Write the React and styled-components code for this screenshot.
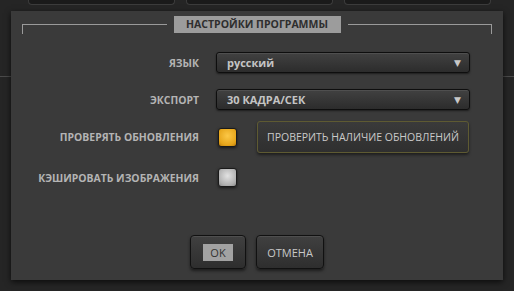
import React from 'react';
import styled, { createGlobalStyle } from 'styled-components';

const Global = createGlobalStyle`
  html, body { margin: 0; padding: 0; background: #252525; }
  body { font-family: "Open Sans", "DejaVu Sans", sans-serif; }
`;

const Page = styled.div`
  position: relative;
  width: 514px;
  height: 291px;
  overflow: hidden;
  background: #252525;
`;

const TopBar = styled.div`
  display: flex;
  gap: 11px;
  padding-left: 28px;
  height: 5px;
`;

const TopButton = styled.div`
  width: 145px;
  height: 4px;
  background: #1a1a1a;
  border: 1px solid #3c3c3c;
  border-top: none;
  border-radius: 0 0 4px 4px;
`;

const BackLine = styled.div`
  margin-top: 71px;
  height: 1px;
  background: #4a4a4a;
`;

const Dialog = styled.div`
  position: absolute;
  left: 11px;
  top: 11px;
  width: 492px;
  height: 269px;
  background: #3a3a3a;
  box-shadow: 0 2px 6px rgba(0, 0, 0, 0.7);
  display: flex;
  flex-direction: column;
`;

const Frame = styled.div`
  margin: 13px 11px 0;
  height: 9px;
  border: 1px solid #9a9a9a;
  border-bottom: none;
  display: flex;
  justify-content: center;
`;

const Title = styled.div`
  margin-top: -9px;
  padding: 0 7px;
  background: #3a3a3a;
  height: 17px;
`;

const TitleText = styled.div`
  background: #9c9c9c;
  color: #2e2e2e;
  font-weight: 700;
  font-size: 10.5px;
  line-height: 17px;
  width: 167px;
  text-align: center;
`;

const Form = styled.div`
  display: grid;
  grid-template-columns: 188px 254px;
  column-gap: 17px;
  margin-top: 18px;
`;

const Label = styled.div`
  text-align: right;
  color: #b4b4b4;
  font-weight: 700;
  font-size: 10.4px;
  display: flex;
  align-items: center;
  justify-content: flex-end;
  height: ${p => p.h}px;
  margin-bottom: ${p => p.mb}px;
`;

const Control = styled.div`
  display: flex;
  align-items: center;
  height: ${p => p.h}px;
  margin-bottom: ${p => p.mb}px;
`;

const Select = styled.div`
  box-sizing: border-box;
  width: 254px;
  height: 21px;
  border: 1px solid #0e0e0e;
  border-radius: 3px;
  background: linear-gradient(#414141, #2c2c2c);
  box-shadow: inset 0 1px 0 rgba(255,255,255,0.08), 0 1px 2px rgba(0,0,0,0.5);
  display: flex;
  align-items: center;
  justify-content: space-between;
  padding: 0 8px 0 10px;
  color: #c4c4c4;
  font-weight: 700;
  font-size: 11px;
`;

const Arrow = styled.span`
  font-size: 9px;
  color: #c8c8c8;
`;

const Check = styled.div`
  box-sizing: border-box;
  width: 19px;
  height: 19px;
  margin-left: 2px;
  border-radius: 3px;
  border: 1px solid #1a1a1a;
  background: ${p => p.on
    ? 'radial-gradient(circle at 50% 40%, #fcc847, #e6a51a 70%, #b87a0c)'
    : 'radial-gradient(circle at 50% 40%, #e2e2e2, #b0b0b0 70%, #8a8a8a)'};
  box-shadow: 0 1px 3px rgba(0,0,0,0.6);
`;

const UpdateButton = styled.div`
  box-sizing: border-box;
  margin-left: 20px;
  width: 212px;
  height: 32px;
  border: 1px solid #5e5a32;
  border-radius: 3px;
  background: linear-gradient(#3a3a3a, #2f2f2f);
  box-shadow: 0 2px 3px rgba(0,0,0,0.5);
  color: #cacaca;
  font-size: 10.5px;
  display: flex;
  align-items: center;
  justify-content: center;
`;

const Footer = styled.div`
  margin-top: auto;
  margin-bottom: 11px;
  display: flex;
  justify-content: center;
  gap: 10px;
`;

const Button = styled.div`
  box-sizing: border-box;
  width: ${p => p.w}px;
  height: 34px;
  border: 1px solid #111;
  border-radius: 4px;
  background: linear-gradient(#404040, #2e2e2e);
  box-shadow: inset 0 1px 0 rgba(255,255,255,0.08), 0 2px 3px rgba(0,0,0,0.5);
  color: #c8c8c8;
  font-size: 11px;
  display: flex;
  align-items: center;
  justify-content: center;
`;

const Focus = styled.span`
  background: #a2a2a2;
  color: #333;
  padding: 1px 7px;
  line-height: 15px;
`;

export default function App() {
  return (
    <Page>
      <Global />
      <TopBar>
        <TopButton />
        <TopButton />
        <TopButton />
      </TopBar>
      <BackLine />
      <Dialog>
        <Frame>
          <Title><TitleText>НАСТРОЙКИ ПРОГРАММЫ</TitleText></Title>
        </Frame>
        <Form>
          <Label h={21} mb={16}>ЯЗЫК</Label>
          <Control h={21} mb={16}><Select>русский<Arrow>▼</Arrow></Select></Control>
          <Label h={21} mb={11}>ЭКСПОРТ</Label>
          <Control h={21} mb={11}><Select>30 КАДРА/СЕК<Arrow>▼</Arrow></Select></Control>
          <Label h={32} mb={15}>ПРОВЕРЯТЬ ОБНОВЛЕНИЯ</Label>
          <Control h={32} mb={15}><Check on /><UpdateButton>ПРОВЕРИТЬ НАЛИЧИЕ ОБНОВЛЕНИЙ</UpdateButton></Control>
          <Label h={19} mb={0}>КЭШИРОВАТЬ ИЗОБРАЖЕНИЯ</Label>
          <Control h={19} mb={0}><Check /></Control>
        </Form>
        <Footer>
          <Button w={56}><Focus>OK</Focus></Button>
          <Button w={68}>ОТМЕНА</Button>
        </Footer>
      </Dialog>
    </Page>
  );
}
